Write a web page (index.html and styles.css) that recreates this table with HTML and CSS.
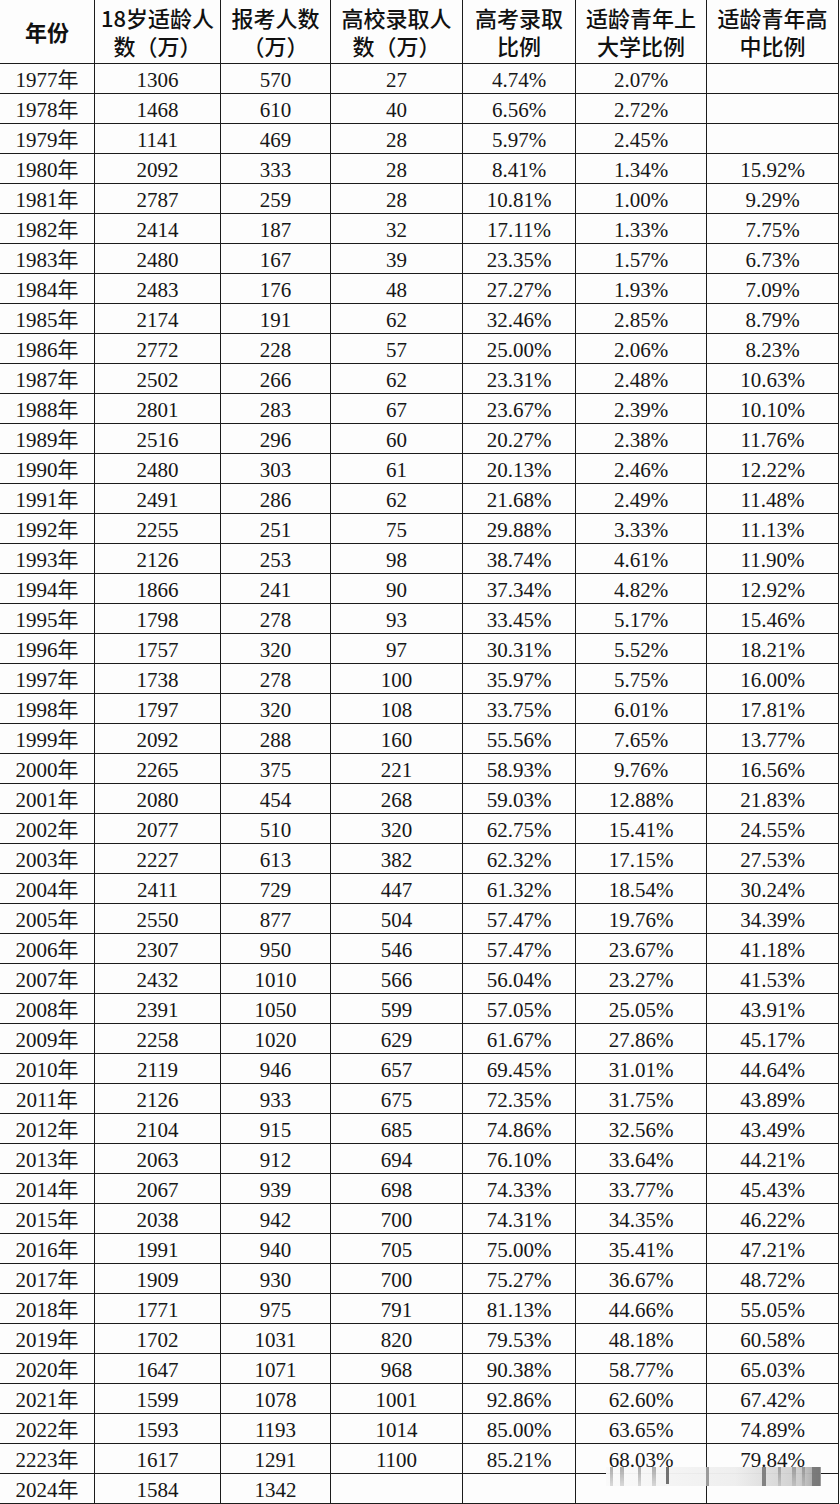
FILE: index.html
```html
<!DOCTYPE html>
<html lang="zh-CN">
<head>
<meta charset="utf-8">
<title>高考录取比例</title>
<link rel="stylesheet" href="styles.css">
</head>
<body>
<div class="page">
  <div class="sheet">
    <div class="c h bold">年份</div>
    <div class="c h">18岁适龄人<br>数（万）</div>
    <div class="c h">报考人数<br>（万）</div>
    <div class="c h">高校录取人<br>数（万）</div>
    <div class="c h">高考录取<br>比例</div>
    <div class="c h">适龄青年上<br>大学比例</div>
    <div class="c h">适龄青年高<br>中比例</div>

    <div class="c">1977年</div><div class="c">1306</div><div class="c">570</div><div class="c">27</div><div class="c">4.74%</div><div class="c">2.07%</div><div class="c"></div>
    <div class="c">1978年</div><div class="c">1468</div><div class="c">610</div><div class="c">40</div><div class="c">6.56%</div><div class="c">2.72%</div><div class="c"></div>
    <div class="c">1979年</div><div class="c">1141</div><div class="c">469</div><div class="c">28</div><div class="c">5.97%</div><div class="c">2.45%</div><div class="c"></div>
    <div class="c">1980年</div><div class="c">2092</div><div class="c">333</div><div class="c">28</div><div class="c">8.41%</div><div class="c">1.34%</div><div class="c">15.92%</div>
    <div class="c">1981年</div><div class="c">2787</div><div class="c">259</div><div class="c">28</div><div class="c">10.81%</div><div class="c">1.00%</div><div class="c">9.29%</div>
    <div class="c">1982年</div><div class="c">2414</div><div class="c">187</div><div class="c">32</div><div class="c">17.11%</div><div class="c">1.33%</div><div class="c">7.75%</div>
    <div class="c">1983年</div><div class="c">2480</div><div class="c">167</div><div class="c">39</div><div class="c">23.35%</div><div class="c">1.57%</div><div class="c">6.73%</div>
    <div class="c">1984年</div><div class="c">2483</div><div class="c">176</div><div class="c">48</div><div class="c">27.27%</div><div class="c">1.93%</div><div class="c">7.09%</div>
    <div class="c">1985年</div><div class="c">2174</div><div class="c">191</div><div class="c">62</div><div class="c">32.46%</div><div class="c">2.85%</div><div class="c">8.79%</div>
    <div class="c">1986年</div><div class="c">2772</div><div class="c">228</div><div class="c">57</div><div class="c">25.00%</div><div class="c">2.06%</div><div class="c">8.23%</div>
    <div class="c">1987年</div><div class="c">2502</div><div class="c">266</div><div class="c">62</div><div class="c">23.31%</div><div class="c">2.48%</div><div class="c">10.63%</div>
    <div class="c">1988年</div><div class="c">2801</div><div class="c">283</div><div class="c">67</div><div class="c">23.67%</div><div class="c">2.39%</div><div class="c">10.10%</div>
    <div class="c">1989年</div><div class="c">2516</div><div class="c">296</div><div class="c">60</div><div class="c">20.27%</div><div class="c">2.38%</div><div class="c">11.76%</div>
    <div class="c">1990年</div><div class="c">2480</div><div class="c">303</div><div class="c">61</div><div class="c">20.13%</div><div class="c">2.46%</div><div class="c">12.22%</div>
    <div class="c">1991年</div><div class="c">2491</div><div class="c">286</div><div class="c">62</div><div class="c">21.68%</div><div class="c">2.49%</div><div class="c">11.48%</div>
    <div class="c">1992年</div><div class="c">2255</div><div class="c">251</div><div class="c">75</div><div class="c">29.88%</div><div class="c">3.33%</div><div class="c">11.13%</div>
    <div class="c">1993年</div><div class="c">2126</div><div class="c">253</div><div class="c">98</div><div class="c">38.74%</div><div class="c">4.61%</div><div class="c">11.90%</div>
    <div class="c">1994年</div><div class="c">1866</div><div class="c">241</div><div class="c">90</div><div class="c">37.34%</div><div class="c">4.82%</div><div class="c">12.92%</div>
    <div class="c">1995年</div><div class="c">1798</div><div class="c">278</div><div class="c">93</div><div class="c">33.45%</div><div class="c">5.17%</div><div class="c">15.46%</div>
    <div class="c">1996年</div><div class="c">1757</div><div class="c">320</div><div class="c">97</div><div class="c">30.31%</div><div class="c">5.52%</div><div class="c">18.21%</div>
    <div class="c">1997年</div><div class="c">1738</div><div class="c">278</div><div class="c">100</div><div class="c">35.97%</div><div class="c">5.75%</div><div class="c">16.00%</div>
    <div class="c">1998年</div><div class="c">1797</div><div class="c">320</div><div class="c">108</div><div class="c">33.75%</div><div class="c">6.01%</div><div class="c">17.81%</div>
    <div class="c">1999年</div><div class="c">2092</div><div class="c">288</div><div class="c">160</div><div class="c">55.56%</div><div class="c">7.65%</div><div class="c">13.77%</div>
    <div class="c">2000年</div><div class="c">2265</div><div class="c">375</div><div class="c">221</div><div class="c">58.93%</div><div class="c">9.76%</div><div class="c">16.56%</div>
    <div class="c">2001年</div><div class="c">2080</div><div class="c">454</div><div class="c">268</div><div class="c">59.03%</div><div class="c">12.88%</div><div class="c">21.83%</div>
    <div class="c">2002年</div><div class="c">2077</div><div class="c">510</div><div class="c">320</div><div class="c">62.75%</div><div class="c">15.41%</div><div class="c">24.55%</div>
    <div class="c">2003年</div><div class="c">2227</div><div class="c">613</div><div class="c">382</div><div class="c">62.32%</div><div class="c">17.15%</div><div class="c">27.53%</div>
    <div class="c">2004年</div><div class="c">2411</div><div class="c">729</div><div class="c">447</div><div class="c">61.32%</div><div class="c">18.54%</div><div class="c">30.24%</div>
    <div class="c">2005年</div><div class="c">2550</div><div class="c">877</div><div class="c">504</div><div class="c">57.47%</div><div class="c">19.76%</div><div class="c">34.39%</div>
    <div class="c">2006年</div><div class="c">2307</div><div class="c">950</div><div class="c">546</div><div class="c">57.47%</div><div class="c">23.67%</div><div class="c">41.18%</div>
    <div class="c">2007年</div><div class="c">2432</div><div class="c">1010</div><div class="c">566</div><div class="c">56.04%</div><div class="c">23.27%</div><div class="c">41.53%</div>
    <div class="c">2008年</div><div class="c">2391</div><div class="c">1050</div><div class="c">599</div><div class="c">57.05%</div><div class="c">25.05%</div><div class="c">43.91%</div>
    <div class="c">2009年</div><div class="c">2258</div><div class="c">1020</div><div class="c">629</div><div class="c">61.67%</div><div class="c">27.86%</div><div class="c">45.17%</div>
    <div class="c">2010年</div><div class="c">2119</div><div class="c">946</div><div class="c">657</div><div class="c">69.45%</div><div class="c">31.01%</div><div class="c">44.64%</div>
    <div class="c">2011年</div><div class="c">2126</div><div class="c">933</div><div class="c">675</div><div class="c">72.35%</div><div class="c">31.75%</div><div class="c">43.89%</div>
    <div class="c">2012年</div><div class="c">2104</div><div class="c">915</div><div class="c">685</div><div class="c">74.86%</div><div class="c">32.56%</div><div class="c">43.49%</div>
    <div class="c">2013年</div><div class="c">2063</div><div class="c">912</div><div class="c">694</div><div class="c">76.10%</div><div class="c">33.64%</div><div class="c">44.21%</div>
    <div class="c">2014年</div><div class="c">2067</div><div class="c">939</div><div class="c">698</div><div class="c">74.33%</div><div class="c">33.77%</div><div class="c">45.43%</div>
    <div class="c">2015年</div><div class="c">2038</div><div class="c">942</div><div class="c">700</div><div class="c">74.31%</div><div class="c">34.35%</div><div class="c">46.22%</div>
    <div class="c">2016年</div><div class="c">1991</div><div class="c">940</div><div class="c">705</div><div class="c">75.00%</div><div class="c">35.41%</div><div class="c">47.21%</div>
    <div class="c">2017年</div><div class="c">1909</div><div class="c">930</div><div class="c">700</div><div class="c">75.27%</div><div class="c">36.67%</div><div class="c">48.72%</div>
    <div class="c">2018年</div><div class="c">1771</div><div class="c">975</div><div class="c">791</div><div class="c">81.13%</div><div class="c">44.66%</div><div class="c">55.05%</div>
    <div class="c">2019年</div><div class="c">1702</div><div class="c">1031</div><div class="c">820</div><div class="c">79.53%</div><div class="c">48.18%</div><div class="c">60.58%</div>
    <div class="c">2020年</div><div class="c">1647</div><div class="c">1071</div><div class="c">968</div><div class="c">90.38%</div><div class="c">58.77%</div><div class="c">65.03%</div>
    <div class="c">2021年</div><div class="c">1599</div><div class="c">1078</div><div class="c">1001</div><div class="c">92.86%</div><div class="c">62.60%</div><div class="c">67.42%</div>
    <div class="c">2022年</div><div class="c">1593</div><div class="c">1193</div><div class="c">1014</div><div class="c">85.00%</div><div class="c">63.65%</div><div class="c">74.89%</div>
    <div class="c">2223年</div><div class="c">1617</div><div class="c">1291</div><div class="c">1100</div><div class="c">85.21%</div><div class="c">68.03%</div><div class="c">79.84%</div>
    <div class="c">2024年</div><div class="c">1584</div><div class="c">1342</div><div class="c"></div><div class="c"></div><div class="c"></div><div class="c"></div>
  </div>
  <div class="smear" aria-hidden="true">
    <span class="bar b1"></span><span class="bar b2"></span><span class="bar b3"></span><span class="bar b4"></span>
    <span class="bar b5"></span><span class="bar b6"></span><span class="bar b7"></span><span class="bar b8"></span>
    <span class="bar b9"></span><span class="bar b10"></span><span class="bar b11"></span>
  </div>
</div>
</body>
</html>
```

FILE: styles.css
```css
html, body {
  margin: 0;
  padding: 0;
  background: #fdfdfd;
}

.page {
  position: relative;
  width: 840px;
  height: 1504px;
  overflow: hidden;
}

.sheet {
  display: grid;
  grid-template-columns: 95px 126px 110px 132px 113px 131px 132px;
  grid-template-rows: 64px;
  grid-auto-rows: 30px;
  width: 839px;
  font-family: "Liberation Serif", "Noto Sans CJK SC", serif;
  font-size: 21px;
  color: #161616;
}

.c {
  box-sizing: border-box;
  border-right: 1px solid #1c1c1c;
  border-bottom: 1px solid #1c1c1c;
  text-align: center;
  line-height: 28px;
  padding-top: 2px;
  white-space: nowrap;
  overflow: hidden;
}

.h {
  display: flex;
  align-items: center;
  justify-content: center;
  padding: 0 0 1px;
  font-family: "Noto Sans CJK SC", sans-serif;
  font-size: 22px;
  line-height: 28px;
  font-weight: 500;
  color: #111;
}

.h.bold {
  font-weight: 700;
}

.smear {
  position: absolute;
  left: 606px;
  top: 1467px;
  width: 215px;
  height: 19px;
  background: linear-gradient(to right, rgba(250,250,250,0.96) 0%, rgba(238,238,238,0.97) 60%, rgba(205,205,205,0.97) 90%, rgba(150,150,150,0.95) 100%);
}

.bar {
  position: absolute;
  top: 0;
  height: 19px;
  background: linear-gradient(to bottom, rgba(120,120,120,0.6), rgba(160,160,160,0.35));
  filter: blur(0.6px);
}

.b1 { left: 4px; width: 3px; }
.b2 { left: 14px; width: 4px; }
.b3 { left: 32px; width: 3px; }
.b4 { left: 46px; width: 4px; }
.b5 { left: 60px; width: 3px; background: rgba(70,70,70,0.75); height: 17px; }
.b6 { left: 100px; width: 3px; background: rgba(120,120,120,0.7); }
.b7 { left: 156px; width: 4px; background: rgba(90,90,90,0.7); }
.b8 { left: 172px; width: 3px; }
.b9 { left: 186px; width: 4px; }
.b10 { left: 196px; width: 3px; }
.b11 { left: 206px; width: 8px; background: rgba(110,110,110,0.8); }
```
